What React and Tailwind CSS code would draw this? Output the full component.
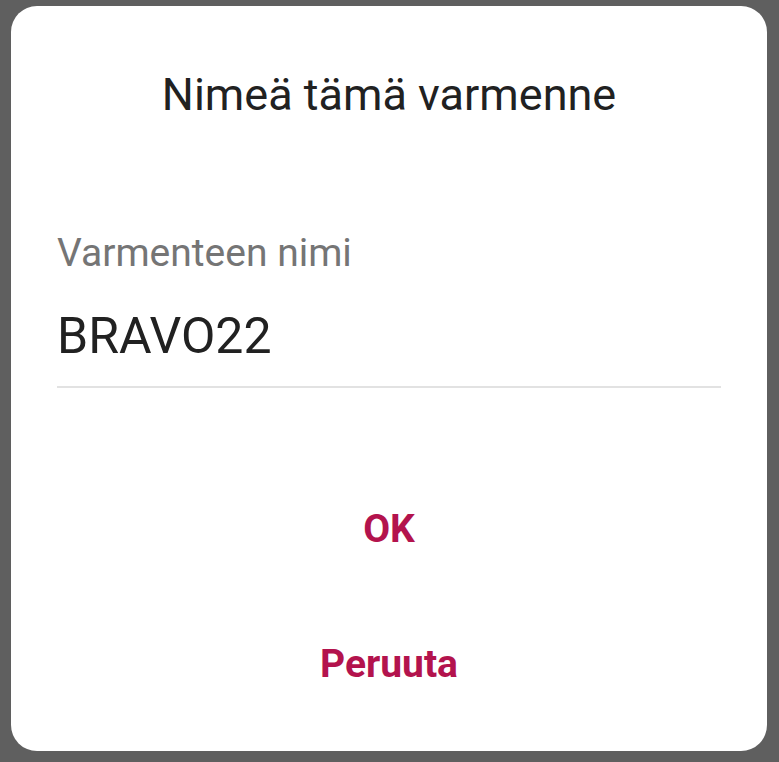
export default function App() {
  return (
    <div className="w-[779px] h-[762px] bg-[#5f5f5f] pl-[11px] pr-[12px] pt-[6px] pb-[11px]" style={{ fontFamily: "Roboto, 'Noto Sans', sans-serif" }}>
      <div className="w-full h-full bg-white rounded-[26px] flex flex-col">
        <div className="pt-[61px] text-center text-[45px] leading-[56px] text-[#212121]">Nimeä tämä varmenne</div>
        <div className="px-[46px] pt-[106px]">
          <div className="text-[39px] leading-[48px] text-[#757575]">Varmenteen nimi</div>
          <div className="pt-[31px] text-[50px] leading-[56px] text-[#212121]">BRAVO22</div>
          <div className="mt-[22px] h-[2px] bg-[#e2e2e2]"></div>
        </div>
        <div className="flex flex-col items-center pt-[117px]">
          <div className="text-[39px] leading-[48px] font-bold text-[#b3134d]">OK</div>
          <div className="pt-[87px] text-[39px] leading-[48px] font-bold text-[#b3134d]">Peruuta</div>
        </div>
      </div>
    </div>
  );
}
